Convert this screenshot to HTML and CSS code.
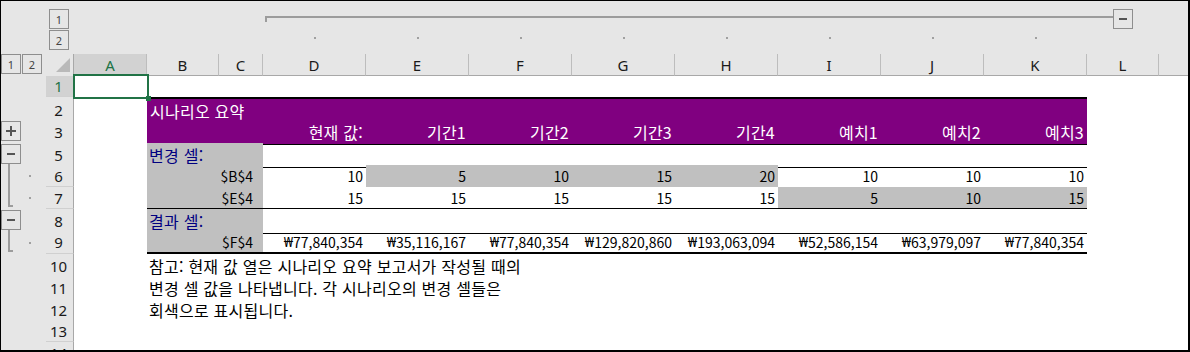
FILE: index.html
```html
<!DOCTYPE html>
<html lang="ko">
<head>
<meta charset="utf-8">
<title>시나리오 요약</title>
<link rel="stylesheet" href="styles.css">
</head>
<body>
<div class="frame">
  <div class="top">
    <div class="levels-col">
      <div class="lbtn">1</div>
      <div class="lbtn">2</div>
    </div>
    <div class="obar">
      <div class="oline"></div>
      <div class="obtn"><span class="minus"></span></div>
    </div>
    <span class="tdot d6"></span>
    <span class="tdot d7"></span>
    <span class="tdot d8"></span>
    <span class="tdot d9"></span>
    <span class="tdot d10"></span>
    <span class="tdot d11"></span>
    <span class="tdot d12"></span>
    <span class="tdot d13"></span>
  </div>

  <div class="hdr">
    <div class="levels-row">
      <div class="lbtn">1</div>
      <div class="lbtn">2</div>
    </div>
    <div class="corner"><span class="tri"></span></div>
    <div class="ch on">A</div>
    <div class="ch">B</div>
    <div class="ch">C</div>
    <div class="ch">D</div>
    <div class="ch">E</div>
    <div class="ch">F</div>
    <div class="ch">G</div>
    <div class="ch">H</div>
    <div class="ch">I</div>
    <div class="ch">J</div>
    <div class="ch">K</div>
    <div class="ch">L</div>
    <div class="ch rest"></div>
  </div>

  <div class="row h21">
    <div class="g"></div>
    <div class="rh on">1</div>
    <div class="c a1"><div class="sel"><span class="handle"></span></div></div>
  </div>

  <div class="row h23">
    <div class="g"></div>
    <div class="rh">2</div>
    <div class="c"></div>
    <div class="c title ko">시나리오 요약</div>
  </div>

  <div class="row h23">
    <div class="g"><div class="obtn mt1"><span class="plus"></span></div></div>
    <div class="rh">3</div>
    <div class="c"></div>
    <div class="c pu bb span2"></div>
    <div class="c pu bb ko">현재 값:</div>
    <div class="c pu bb ko">기간1</div>
    <div class="c pu bb ko">기간2</div>
    <div class="c pu bb ko">기간3</div>
    <div class="c pu bb ko">기간4</div>
    <div class="c pu bb ko">예치1</div>
    <div class="c pu bb ko">예치2</div>
    <div class="c pu bb ko">예치3</div>
  </div>

  <div class="row h22">
    <div class="g gcol"><div class="obtn mt1"><span class="minus"></span></div><span class="stem"></span></div>
    <div class="rh">5</div>
    <div class="c"></div>
    <div class="c gy bb span2 lab ko">변경 셀:</div>
    <div class="c bb"></div><div class="c bb"></div><div class="c bb"></div><div class="c bb"></div>
    <div class="c bb"></div><div class="c bb"></div><div class="c bb"></div><div class="c bb"></div>
  </div>

  <div class="row h22">
    <div class="g grow"><span class="stem"></span><span class="dot"></span></div>
    <div class="rh">6</div>
    <div class="c"></div>
    <div class="c gy span2 ref">$B$4</div>
    <div class="c">10</div>
    <div class="c gy">5</div>
    <div class="c gy">10</div>
    <div class="c gy">15</div>
    <div class="c gy">20</div>
    <div class="c">10</div>
    <div class="c">10</div>
    <div class="c">10</div>
  </div>

  <div class="row h22">
    <div class="g grow"><span class="stem end"></span><span class="dot"></span></div>
    <div class="rh">7</div>
    <div class="c"></div>
    <div class="c gy bb span2 ref">$E$4</div>
    <div class="c bb">15</div>
    <div class="c bb">15</div>
    <div class="c bb">15</div>
    <div class="c bb">15</div>
    <div class="c bb">15</div>
    <div class="c gy bb">5</div>
    <div class="c gy bb">10</div>
    <div class="c gy bb">15</div>
  </div>

  <div class="row h22">
    <div class="g gcol"><div class="obtn mt1"><span class="minus"></span></div><span class="stem"></span></div>
    <div class="rh">8</div>
    <div class="c"></div>
    <div class="c gy bb span2 lab ko">결과 셀:</div>
    <div class="c bb"></div><div class="c bb"></div><div class="c bb"></div><div class="c bb"></div>
    <div class="c bb"></div><div class="c bb"></div><div class="c bb"></div><div class="c bb"></div>
  </div>

  <div class="row h23">
    <div class="g grow"><span class="stem end"></span><span class="dot"></span></div>
    <div class="rh">9</div>
    <div class="c"></div>
    <div class="c gy bb2 span2 ref">$F$4</div>
    <div class="c bb2"><span class="won">₩</span>77,840,354</div>
    <div class="c bb2"><span class="won">₩</span>35,116,167</div>
    <div class="c bb2"><span class="won">₩</span>77,840,354</div>
    <div class="c bb2"><span class="won">₩</span>129,820,860</div>
    <div class="c bb2"><span class="won">₩</span>193,063,094</div>
    <div class="c bb2"><span class="won">₩</span>52,586,154</div>
    <div class="c bb2"><span class="won">₩</span>63,979,097</div>
    <div class="c bb2"><span class="won">₩</span>77,840,354</div>
  </div>

  <div class="row h22">
    <div class="g"></div>
    <div class="rh">10</div>
    <div class="c"></div>
    <div class="c note ko">참고: 현재 값 열은 시나리오 요약 보고서가 작성될 때의</div>
  </div>
  <div class="row h22">
    <div class="g"></div>
    <div class="rh">11</div>
    <div class="c"></div>
    <div class="c note ko">변경 셀 값을 나타냅니다. 각 시나리오의 변경 셀들은</div>
  </div>
  <div class="row h22">
    <div class="g"></div>
    <div class="rh">12</div>
    <div class="c"></div>
    <div class="c note ko">회색으로 표시됩니다.</div>
  </div>
  <div class="row h22">
    <div class="g"></div>
    <div class="rh">13</div>
  </div>
  <div class="row h22">
    <div class="g"></div>
    <div class="rh">14</div>
  </div>
</div>
</body>
</html>
```

FILE: styles.css
```css
:root {
  --cols: 45px 28px 73px 72px 44px repeat(8, 103px) 72px 1fr;
  --hbg: #e6e6e6;
  --oline: #9c9c9c;
}

* { box-sizing: border-box; }

html, body {
  margin: 0;
  padding: 0;
  background: #fff;
}

.frame {
  width: 1190px;
  height: 352px;
  border-style: solid;
  border-color: #000;
  border-width: 1px 2px 2px 1px;
  overflow: hidden;
  background: #fff;
  font-family: "Noto Sans CJK KR", sans-serif;
  font-size: 14px;
  color: #000;
}

/* ---------- top outline area ---------- */
.top {
  display: grid;
  grid-template-columns: var(--cols);
  grid-template-rows: 53px;
  background: var(--hbg);
}

.levels-col {
  grid-column: 2;
  grid-row: 1;
  display: flex;
  flex-direction: column;
  gap: 1px;
  padding: 8px 0 0 3px;
}

.lbtn {
  width: 20px;
  height: 20px;
  border: 1px solid #8e8e8e;
  display: flex;
  align-items: center;
  justify-content: center;
  font-family: "Noto Sans", sans-serif;
  font-size: 11px;
  color: #444;
}

.obar {
  grid-column: 6 / 15;
  grid-row: 1;
  display: flex;
  align-items: flex-start;
  margin: 8px 26px 0 2px;
}

.oline {
  flex: 1;
  height: 6px;
  margin-top: 7px;
  border-top: 2px solid var(--oline);
  border-left: 2px solid var(--oline);
}

.obtn {
  width: 20px;
  height: 20px;
  border: 1px solid #8e8e8e;
  display: flex;
  align-items: center;
  justify-content: center;
  position: relative;
  flex: none;
}

.obtn.mt1 { margin-top: 1px; }

.minus {
  width: 8px;
  height: 2px;
  background: #555;
}

.plus {
  width: 10px;
  height: 10px;
  background:
    linear-gradient(#555, #555) center / 10px 2px no-repeat,
    linear-gradient(#555, #555) center / 2px 10px no-repeat;
}

.tdot {
  grid-row: 1;
  justify-self: center;
  align-self: start;
  margin-top: 36px;
  width: 2px;
  height: 2px;
  background: #a0a0a0;
}
.d6 { grid-column: 6; }
.d7 { grid-column: 7; }
.d8 { grid-column: 8; }
.d9 { grid-column: 9; }
.d10 { grid-column: 10; }
.d11 { grid-column: 11; }
.d12 { grid-column: 12; }
.d13 { grid-column: 13; }

/* ---------- column headers ---------- */
.hdr {
  display: grid;
  grid-template-columns: var(--cols);
  height: 22px;
  background: var(--hbg);
}

.levels-row {
  display: flex;
  gap: 1px;
  align-items: flex-start;
}

.corner {
  display: flex;
  align-items: flex-end;
  justify-content: flex-end;
  padding: 0 3px 4px 0;
  border-right: 1px solid #a8a8a8;
}

.tri {
  width: 14px;
  height: 14px;
  background: #b9b9b9;
  clip-path: polygon(100% 0, 100% 100%, 0 100%);
}

.ch {
  display: flex;
  align-items: center;
  justify-content: center;
  border-right: 1px solid #bdbdbd;
  border-bottom: 1px solid #a8a8a8;
  font-family: "Noto Sans", sans-serif;
  font-size: 15px;
  color: #1a1a1a;
}

.ch.on {
  background: #d2d2d2;
  color: #217346;
}

.ch.rest { border-right: none; }

/* ---------- rows ---------- */
.row {
  display: grid;
  grid-template-columns: var(--cols);
  background: #fff;
}
.h21 { height: 21px; }
.h22 { height: 22px; }
.h23 { height: 23px; }

.g {
  background: var(--hbg);
  display: flex;
}

.gcol {
  flex-direction: column;
}

.grow {
  align-items: center;
}

.stem {
  width: 5px;
  margin-left: 7px;
  border-left: 2px solid var(--oline);
  align-self: stretch;
  flex: none;
}

.gcol .stem {
  flex: 1;
  align-self: flex-start;
}

.stem.end {
  border-bottom: 2px solid var(--oline);
  margin-bottom: 2px;
}

.dot {
  width: 2px;
  height: 2px;
  margin-left: 16px;
  background: #a0a0a0;
}

.rh {
  background: var(--hbg);
  border-bottom: 1px solid #d0d0d0;
  border-right: 1px solid #a8a8a8;
  display: flex;
  align-items: center;
  justify-content: center;
  padding-right: 2px;
  font-family: "Noto Sans", sans-serif;
  font-size: 15px;
  color: #1a1a1a;
}

.rh.on {
  background: #d2d2d2;
  color: #217346;
}

.c {
  display: flex;
  align-items: center;
  justify-content: flex-end;
  padding: 0 3px;
  white-space: nowrap;
}

.ko {
  font-size: 16px;
  letter-spacing: 0.25px;
}

.won {
  font-family: "Noto Sans", sans-serif;
  font-size: 14px;
}

.a1 { position: relative; }

.sel {
  position: absolute;
  left: -1px;
  top: -2px;
  width: 76px;
  height: 25px;
  border: 2px solid #217346;
  z-index: 2;
}

.handle {
  position: absolute;
  right: -4px;
  bottom: -4px;
  width: 5px;
  height: 5px;
  background: #217346;
}

.title {
  grid-column: 4 / 14;
  background: #800080;
  color: #fff;
  border-top: 2px solid #000;
  justify-content: flex-start;
  padding-left: 3px;
}

.span2 { grid-column: span 2; }

.pu {
  background: #800080;
  color: #fff;
}

.gy { background: #c0c0c0; }

.bb { border-bottom: 1px solid #000; }
.bb2 { border-bottom: 2px solid #000; }

.lab {
  justify-content: flex-start;
  padding-left: 2px;
  color: #000080;
}

.ref { padding-right: 10px; }

.note {
  grid-column: 4 / 14;
  justify-content: flex-start;
  padding-left: 2px;
}
```
